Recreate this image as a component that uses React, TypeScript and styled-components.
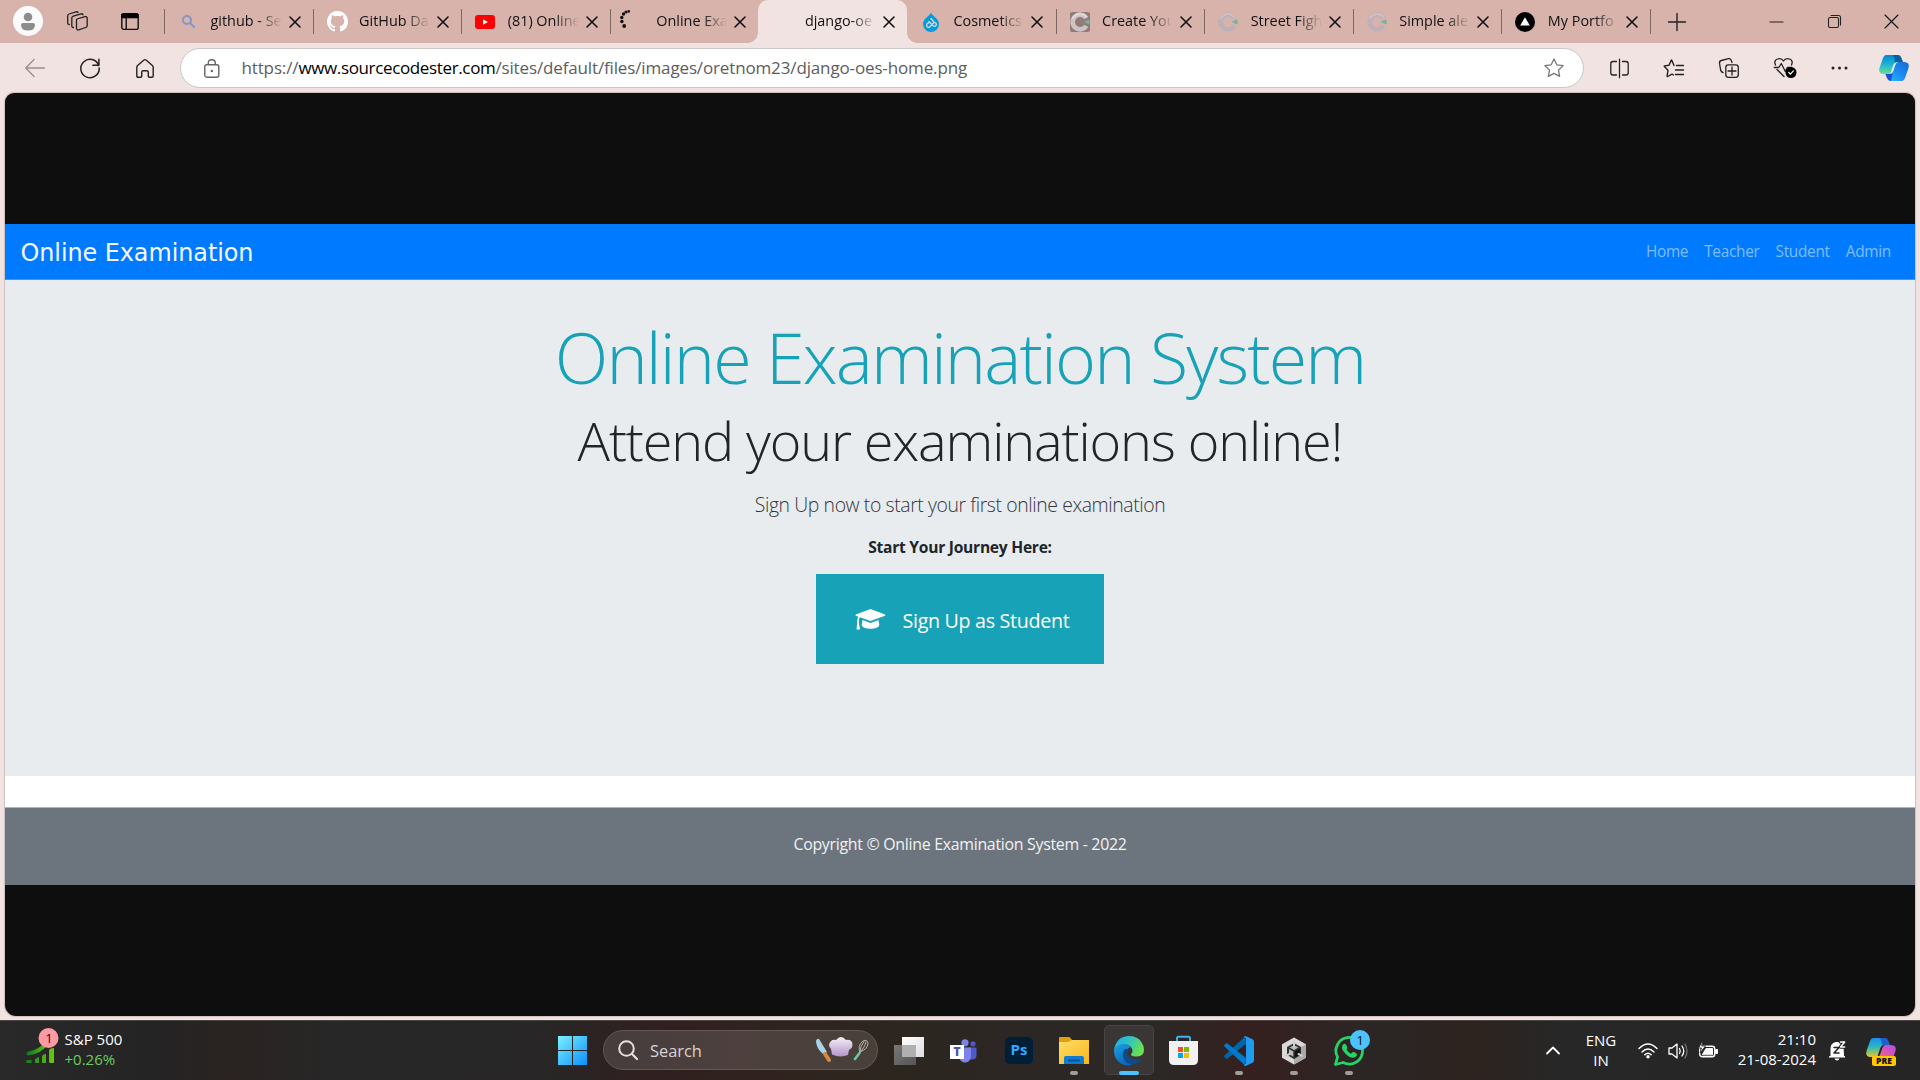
import React from "react";
import styled, { createGlobalStyle } from "styled-components";

const sans = '"Open Sans", "Noto Sans", sans-serif';

const GlobalStyle = createGlobalStyle`
  * { box-sizing: border-box; }
  body { margin: 0; overflow: hidden; background: #f1e3e1; font-family: ${sans}; }
  svg { display: block; flex: none; overflow: visible; }
`;

const Screen = styled.div`
  width: 1920px;
  height: 1080px;
  display: flex;
  flex-direction: column;
  overflow: hidden;
`;

/* ---------- tab strip ---------- */

const TabStrip = styled.header`
  height: 43px;
  flex: none;
  display: flex;
  background: #d8b3ac;
`;

const StripTools = styled.div`
  width: 164px;
  display: flex;
  align-items: center;
  padding: 0 0 1px 13px;
`;

const Avatar = styled.div`
  width: 30px;
  height: 30px;
  border-radius: 50%;
  background: #fbfbfb;
  display: grid;
  place-items: center;
  margin-right: 24px;
`;

const ToolGap = styled.div`
  margin-right: 33px;
`;

const TabItem = styled.div<{ $active?: boolean; $line?: boolean }>`
  width: 148.6px;
  height: 43px;
  flex: none;
  display: flex;
  align-items: center;
  position: relative;
  padding-left: 14px;
  background: ${(p) => (p.$active ? "#f1e3e1" : "transparent")};
  border-radius: ${(p) => (p.$active ? "10px 10px 0 0" : "0")};
  &::before {
    content: "";
    display: ${(p) => (p.$line || p.$active ? "block" : "none")};
    position: absolute;
    left: ${(p) => (p.$active ? "-10px" : "0")};
    top: ${(p) => (p.$active ? "33px" : "9px")};
    width: ${(p) => (p.$active ? "10px" : "1px")};
    height: ${(p) => (p.$active ? "10px" : "25px")};
    background: ${(p) => (p.$active ? "radial-gradient(circle at 0 0, transparent 9.5px, #f1e3e1 10px)" : "#7d6763")};
  }
  &::after {
    content: "";
    display: ${(p) => (p.$active ? "block" : "none")};
    position: absolute;
    right: -10px;
    top: 33px;
    width: 10px;
    height: 10px;
    background: radial-gradient(circle at 100% 0, transparent 9.5px, #f1e3e1 10px);
  }
`;

const TabIcon = styled.div`
  width: 20px;
  height: 43px;
  display: grid;
  place-items: center;
`;

const TabTitle = styled.div`
  width: 73px;
  margin-left: 12.5px;
  white-space: nowrap;
  font-size: 14.4px;
  line-height: 24px;
  padding-bottom: 1px;
  color: #111;
  mask-image: linear-gradient(90deg, #000 46px, transparent 71px);
`;

const TabClose = styled.div`
  margin-left: 6px;
`;

const StripEnd = styled.div`
  width: 56px;
  height: 25px;
  margin-top: 9px;
  border-left: 1px solid #7d6763;
  display: flex;
  align-items: center;
  padding-left: 17px;
`;

const WindowButtons = styled.div`
  margin-left: auto;
  display: flex;
`;

const WindowButton = styled.div`
  width: 57.3px;
  height: 43px;
  display: grid;
  place-items: center;
`;

/* ---------- address bar ---------- */

const Toolbar = styled.div`
  height: 50px;
  flex: none;
  display: flex;
  align-items: center;
  padding-left: 7.5px;
  background: #f1e3e1;
`;

const ToolCell = styled.div`
  width: 55px;
  height: 48px;
  display: grid;
  place-items: center;
  flex: none;
`;

const AddressField = styled.div`
  width: 1404px;
  height: 40px;
  margin: 0 8px 0 7px;
  flex: none;
  border: 1px solid #cbc7c6;
  border-radius: 20px;
  background: #fff;
  display: flex;
  align-items: center;
  padding: 0 19px 0 23px;
`;

const Url = styled.div`
  flex: 1;
  margin-left: 22px;
  font-size: 17px;
  letter-spacing: -0.14px;
  line-height: 24px;
  color: #5d5d5d;
`;

const Domain = styled.span`
  color: #000;
  letter-spacing: -0.36px;
`;

/* ---------- image viewer ---------- */

const Viewer = styled.main`
  width: 1910px;
  height: 923px;
  margin: 0 auto 4px;
  flex: none;
  border-radius: 9px 9px 11px 11px;
  background: #0e0e0e;
  display: flex;
  flex-direction: column;
  padding-top: 131px;
  box-shadow: 0 0 1px 1px #cdbfbd;
`;

const Navbar = styled.nav`
  height: 56px;
  flex: none;
  background: #007bff;
  border-bottom: 1px solid #3c98f8;
  display: flex;
  justify-content: space-between;
  align-items: center;
  padding: 0 24px 0 15.5px;
`;

const Brand = styled.div`
  font-family: "DejaVu Sans", sans-serif;
  font-size: 23.9px;
  line-height: 36px;
  letter-spacing: -0.06px;
  padding-top: 2px;
  color: #f4f8ff;
`;

const NavLinks = styled.div`
  display: flex;
  gap: 16px;
`;

const NavLink = styled.a`
  font-size: 15.4px;
  letter-spacing: -0.3px;
  line-height: 24px;
  padding-top: 1px;
  color: #80bdff;
`;

const Hero = styled.section`
  height: 496px;
  flex: none;
  background: #e8ecef;
  display: flex;
  flex-direction: column;
  align-items: center;
  padding-top: 35px;
`;

const Title = styled.h1`
  margin: 0;
  font-size: 70px;
  font-weight: 300;
  line-height: 84px;
  letter-spacing: -1.88px;
  color: #17a2b8;
`;

const Subtitle = styled.h2`
  margin: 7px 0 0;
  font-size: 54px;
  font-weight: 300;
  line-height: 68px;
  letter-spacing: -1.12px;
  color: #212529;
`;

const Lead = styled.p`
  margin: 16px 0 0;
  font-size: 19.4px;
  font-weight: 300;
  line-height: 30px;
  letter-spacing: -0.4px;
  color: #33373b;
`;

const Prompt = styled.p`
  margin: 15px 0 0;
  font-size: 15.6px;
  font-weight: 700;
  line-height: 24px;
  letter-spacing: -0.26px;
  color: #212529;
`;

const SignUp = styled.button`
  width: 288px;
  height: 90px;
  margin: 15px 0 0;
  padding: 2px 0 0 38.5px;
  border: 0;
  background: #17a2b8;
  color: #fff;
  display: flex;
  align-items: center;
  gap: 17px;
  font-family: ${sans};
  font-size: 19.7px;
  letter-spacing: -0.32px;
`;

const Paper = styled.div`
  flex: none;
  padding-top: 32px;
  background: #fff;
`;

const Footer = styled.footer`
  height: 77px;
  background: #6c757d;
  box-shadow: 0 -1px 0 #b0b5b4;
  text-align: center;
  padding-top: 24px;
  font-size: 15.9px;
  line-height: 24px;
  letter-spacing: -0.29px;
  color: #f1f2f3;
`;

/* ---------- taskbar ---------- */

const Taskbar = styled.footer`
  height: 60px;
  flex: none;
  border-top: 1px solid #4a4646;
  display: flex;
  color: #fff;
  background: linear-gradient(90deg, #292929 0, #242424 150px, #2a2321 230px, #272727 330px, #282626 540px, #302020 650px, #30241f 800px, #2c261f 900px, #2b2725 1050px, #2b2826 1160px, #35201f 1250px, #2b2625 1370px, #2d231f 1470px, #272727 1560px, #252525 1920px);
`;

const Widget = styled.div`
  width: 545px;
  display: flex;
  padding: 8px 0 0 26px;
`;

const WidgetText = styled.div`
  margin-left: 6.5px;
  font-size: 15px;
  line-height: 20px;
`;

const Gain = styled.div`
  color: #6ccb5f;
`;

const TaskCell = styled.div<{ $focused?: boolean }>`
  width: 55px;
  height: 59px;
  flex: none;
  position: relative;
  display: grid;
  place-items: center;
  &::before {
    content: "";
    position: absolute;
    display: ${(p) => (p.$focused ? "block" : "none")};
    inset: 4px 2px 5px 3px;
    border: 1px solid #4a4444;
    border-radius: 5px;
    background: #3b3636;
  }
  svg { position: relative; }
`;

const Indicator = styled.div<{ $active?: boolean }>`
  position: absolute;
  bottom: 5px;
  left: ${(p) => (p.$active ? "18px" : "24px")};
  width: ${(p) => (p.$active ? "20px" : "8px")};
  height: 4px;
  border-radius: 2px;
  background: ${(p) => (p.$active ? "#4cc2ff" : "#a09c9b")};
`;

const SearchBox = styled.div`
  width: 275px;
  height: 40px;
  margin: 9px 3px 0 3px;
  flex: none;
  border: 1px solid #635857;
  border-radius: 20px;
  background: linear-gradient(90deg, #473d3d, #4d403e 50%, #494039);
  display: flex;
  align-items: center;
  padding: 0 8px 0 14px;
`;

const SearchLabel = styled.div`
  flex: 1;
  margin-left: 12px;
  padding-top: 1px;
  font-size: 16.4px;
  line-height: 24px;
  color: #d8d3d2;
`;

const Tray = styled.div`
  margin-left: auto;
  width: 374px;
  display: flex;
  align-items: center;
  font-size: 15px;
  line-height: 20px;
`;

const Language = styled.div`
  width: 34px;
  margin: 0 20px 0 24px;
  padding-bottom: 2px;
  text-align: center;
`;

const StatusIcons = styled.div`
  width: 82px;
  display: flex;
  gap: 10px;
`;

const Clock = styled.div`
  width: 96px;
  text-align: right;
  margin-right: 12px;
  padding-bottom: 4px;
`;

const Bell = styled.div`
  margin-right: 20px;
`;

/* ---------- drawings ---------- */

const Draw = ({ w, h, children }: { w: number; h: number; children: React.ReactNode }) => (
  <svg width={w} height={h} viewBox={`0 0 ${w} ${h}`} fill="none" strokeLinecap="round" strokeLinejoin="round">
    {children}
  </svg>
);

const CloseX = ({ size = 10, w = 1.6 }: { size?: number; w?: number }) => (
  <Draw w={size} h={size}><path d={`M0 0 ${size} ${size}M${size} 0 0 ${size}`} stroke="#111" strokeWidth={w} /></Draw>
);

const RingC = ({ boxed }: { boxed?: boolean }) => (
  <Draw w={20} h={20}>
    {boxed && <rect width="20" height="20" rx="2" fill="#917c77" />}
    <path d="M16.300 6.100A7.400 7.400 0 1 0 16.300 13.900" stroke={boxed ? "#cfc2c6" : "#beb0b8"} strokeWidth="4.600" strokeLinecap="butt" />
    <path d="M16 4.500A8.200 8.200 0 0 0 3 6" stroke={boxed ? "#e2d8da" : "#cfc0c5"} strokeWidth="2" />
    <path d="M19 8.300v3.600l-4-1.800z" fill="#79b9a5" stroke="#68b49d" strokeWidth="1" />
  </Draw>
);

const SearchMini = () => (
  <Draw w={13} h={13}><circle cx="5" cy="5" r="4" stroke="#8296bf" strokeWidth="1.900" /><path d="m8.300 8.300 3.700 3.700" stroke="#8296bf" strokeWidth="2" /></Draw>
);

const GitHubMark = () => (
  <svg width="21" height="21" viewBox="0 0 16 16" fill="#fff">
    <path d="M8 0C3.580 0 0 3.580 0 8c0 3.540 2.290 6.530 5.470 7.590.4.070.55-.17.55-.38 0-.19-.01-.82-.01-1.490-2.010.37-2.530-.49-2.690-.94-.09-.23-.48-.94-.82-1.130-.28-.15-.68-.52-.01-.53.63-.01 1.080.58 1.230.82.72 1.210 1.870.87 2.330.66.07-.52.28-.87.51-1.070-1.780-.2-3.640-.89-3.640-3.950 0-.87.31-1.590.82-2.150-.08-.2-.36-1.020.08-2.120 0 0 .67-.21 2.200.82.64-.18 1.320-.27 2-.27s1.360.09 2 .27c1.530-1.040 2.200-.82 2.200-.82.44 1.100.16 1.920.08 2.120.51.56.82 1.270.82 2.150 0 3.070-1.870 3.750-3.650 3.950.29.25.54.73.54 1.480 0 1.070-.01 1.930-.01 2.200 0 .21.15.46.55.38A8.010 8.010 0 0 0 16 8c0-4.420-3.580-8-8-8z" />
  </svg>
);

const YouTubeMark = () => (
  <Draw w={20} h={14}><rect width="20" height="14" rx="3" fill="#f00" /><path d="m8 4.200 5 2.800-5 2.800z" fill="#fff" /></Draw>
);

const Spinner = () => (
  <Draw w={20} h={20}>
    <g fill="#111" transform="translate(-4 -2.500)">
      <circle cx="4.200" cy="16.500" r="1.900" /><circle cx="1.900" cy="12" r="1.700" /><circle cx="1.800" cy="8" r="1.700" />
      <circle cx="3.500" cy="4.500" r="1.700" /><circle cx="6" cy="2.500" r="1.600" /><circle cx="8.700" cy="1.900" r="1.300" />
    </g>
  </Draw>
);

const DrupalMark = () => (
  <Draw w={16} h={20}>
    <path d="M8 .5C9 4 16 6.500 16 12a8 8 0 0 1-16 0C0 6.500 7 4 8 .5Z" fill="#009cde" />
    <path d="M6 9.500 10.500 14a1.900 1.900 0 1 0 .5-3.500L8 13.500l-1.500 1.700a1.900 1.900 0 1 1-1.500-4l1.500-1M8 6.500l3 3.500" stroke="#d8d3d6" strokeWidth="1.400" />
  </Draw>
);

const VercelMark = () => (
  <Draw w={20} h={20}><circle cx="10" cy="10" r="10" fill="#000" /><path d="m10 5.300 4.800 8.200H5.200z" fill="#fff" /></Draw>
);

const tabs = [
  { title: "github - Se", icon: <SearchMini />, line: true },
  { title: "GitHub Da", icon: <GitHubMark />, line: true },
  { title: "(81) Online", icon: <YouTubeMark />, line: true },
  { title: "Online Exa", icon: <Spinner />, line: true },
  { title: "django-oe", icon: null, active: true },
  { title: "Cosmetics", icon: <DrupalMark /> },
  { title: "Create You", icon: <RingC boxed />, line: true },
  { title: "Street Figh", icon: <RingC />, line: true },
  { title: "Simple ale", icon: <RingC />, line: true },
  { title: "My Portfo", icon: <VercelMark />, line: true },
];

const Workspaces = () => (
  <Draw w={21} h={20}>
    <g stroke="#222" strokeWidth="1.300">
      <path d="m10 8 8-2.300q2-.4 2.200 1.300v7.500q0 1.500-1.500 2l-7 2.300q-2 .5-2.200-1.500V9.500q0-1.200.5-1.500Z" />
      <path d="M6.500 16.500q-1.500.2-1.700-1.500V7q0-1.300 1.500-1.800L14 2.800q1.500-.3 2 1" />
      <path d="M2.300 13.500Q.7 13.500.7 12V4.800Q.7 3.400 2 3L9 .8q1.500-.3 2 .8" />
    </g>
  </Draw>
);

const TabActions = () => (
  <Draw w={18} h={17}>
    <rect x=".8" y=".8" width="16.400" height="15.600" rx="2" stroke="#111" strokeWidth="1.400" />
    <path d="M1 1h16v3.800H1z" fill="#000" stroke="#000" /><path d="M5.200 5v11" stroke="#111" strokeWidth="1.400" />
  </Draw>
);

const GradCap = () => (
  <Draw w={31} h={22}>
    <path d="M15.500 0 30 5.500Q31 6.200 30 6.800L15.500 12 5 8.200Q3.800 9.500 3.700 11.500q1 .8.100 2L5 20.500H1.500L2.300 13.500q-1-1 0-2 .1-2 1-3.800L.8 6.800Q0 6.200.8 5.500Z" fill="#fff" />
    <path d="m7.500 11 8 2.900 8-2.900.8 5.200q-1 3.400-8.800 3.600-7.800-.2-8.800-3.600Z" fill="#fff" />
  </Draw>
);

const Copilot = ({ pre }: { pre?: boolean }) => (
  <svg width="30" height="28" viewBox="0 0 30 28">
    <defs>
      <linearGradient id={pre ? "cpa" : "cba"} x1="0" y1="0" x2="0" y2="1"><stop stopColor={pre ? "#1a8cf0" : "#0a86cc"} /><stop offset=".45" stopColor={pre ? "#2ab7c0" : "#18b0d8"} /><stop offset="1" stopColor={pre ? "#e4c72c" : "#68e090"} /></linearGradient>
      <linearGradient id={pre ? "cpb" : "cbb"} x1="1" y1="0" x2="0" y2="1"><stop stopColor={pre ? "#a84df0" : "#1668d8"} /><stop offset=".5" stopColor={pre ? "#e85a9c" : "#1b8bf5"} /><stop offset="1" stopColor={pre ? "#f79455" : "#28c2fc"} /></linearGradient>
    </defs>
    <path d="M7 1h11q3 0 4 3l1.500 4H19q-2 0-3 3l-2 6q-1 3-4 3H5q-6 0-4.500-6L4 4q1-3 3-3Z" fill={`url(#${pre ? "cpa" : "cba"})`} />
    <path d="M14 1h5q2.500 0 3.500 3l1.500 4h-5q-2 0-3 2 0-6-2-9Z" fill={pre ? "#2452cc" : "#08579d"} opacity=".85" />
    <path d="M23 27H12q-3 0-4-3l-1.500-4H11q2 0 3-3l2-6q1-3 4-3h5q6 0 4.500 6L26 24q-1 3-3 3Z" fill={`url(#${pre ? "cpb" : "cbb"})`} />
    {!pre && <path d="M6.500 20H11q2 0 3-2l-2 9q-3-.3-4-3Z" fill="#193fd8" opacity=".85" />}
    <path d="M18.800 8.500q-2 .5-2.500 2.500l-2.500 7q-.5 1.500-2.500 2 .300-1 .800-2.500l2-6q.8-2.500 2.700-3Z" fill={pre ? "#262626" : "#e9f2f0"} />
    {pre && (
      <g><rect x="6" y="19" width="24" height="10" rx="2" fill="#ffc800" /><text x="18" y="27" textAnchor="middle" fontFamily="Open Sans" fontSize="8.500" fontWeight="800" fill="#111">PRE</text></g>
    )}
  </svg>
);

const StockIcon = () => (
  <Draw w={32} h={44}>
    <defs><linearGradient id="stk"><stop stopColor="#117a22" /><stop offset="1" stopColor="#68c90d" /></linearGradient></defs>
    <path d="M2.500 24.500C11 23.500 17 19 22 13" stroke="url(#stk)" strokeWidth="4" />
    <path d="M1.500 31h4v3h-4a1 1 0 0 1 0-3ZM9 30l4-2v6H9ZM16 27q1-2 4-2v9h-4ZM23 21q1-2 5-2v15h-4q-1 0-1-1Z" fill="url(#stk)" />
    <circle cx="22.500" cy="9" r="10" fill="#ff99a4" />
    <text x="23" y="13.500" textAnchor="middle" fontFamily="Open Sans" fontSize="13" fill="#111">1</text>
  </Draw>
);

const WindowsLogo = () => (
  <Draw w={29} h={29}>
    <defs><linearGradient id="win" x1="0" y1="0" x2="29" y2="29" gradientUnits="userSpaceOnUse"><stop stopColor="#7cf0ff" /><stop offset="1" stopColor="#0a90fa" /></linearGradient></defs>
    <path d="M0 0h14v14H0zM15 0h14v14H15zM0 15h14v14H0zM15 15h14v14H15z" fill="url(#win)" />
  </Draw>
);

const ChefArt = () => (
  <Draw w={54} h={28}>
    <defs><linearGradient id="hat" x1="0" y1="0" x2="0" y2="1"><stop stopColor="#f4eef8" /><stop offset="1" stopColor="#b596cc" /></linearGradient></defs>
    <path d="M1 5q1-3 3-2l8 13-4 2Q1 12 1 5Z" fill="#a9d3e8" /><path d="m10 18 4 6" stroke="#d9893e" strokeWidth="4" />
    <path d="M17 18.500 16 13q-4-4 0-8 2-2 5-1 5-6 10 0 4-1 6 2 2 5-3 8l-1 5q-8 3-16-.5Z" fill="url(#hat)" />
    <path d="M40 23 44.500 17" stroke="#68c7b0" strokeWidth="2.500" />
    <path d="M45 16q-3-6 3-11 4-2 5 2 0 6-8 9ZM45 16q0-6 4-10.500M45 16q4-3 6-10" stroke="#b4b4ac" strokeWidth="1" />
  </Draw>
);

const TaskView = () => (
  <Draw w={30} h={28}>
    <defs><linearGradient id="tva" x1="0" y1="0" x2="1" y2="1"><stop stopColor="#fff" /><stop offset="1" stopColor="#ddd" /></linearGradient><linearGradient id="tvb" x1="0" y1="0" x2="1" y2="1"><stop stopColor="#777" /><stop offset="1" stopColor="#555" /></linearGradient></defs>
    <path d="M8 0h22v20H8z" fill="url(#tva)" /><path d="M0 8h22v20H0z" fill="url(#tvb)" /><path d="M8 8h14v12H8z" fill="#b0b0b0" />
  </Draw>
);

const Teams = () => (
  <Draw w={27} h={24}>
    <circle cx="15" cy="3.800" r="3.600" fill="#7b83eb" /><circle cx="23" cy="4.800" r="2.600" fill="#5059c9" />
    <path d="M18 8.500h8.500V16q0 4.500-4.500 4.500h-4z" fill="#5059c9" /><path d="M10 8.500h11v9q-1 6-6 6-4 0-5.500-4z" fill="#7b83eb" />
    <path d="M0 6h14v14H0z" fill="#fff" /><text x="7" y="17.300" textAnchor="middle" fontFamily="Open Sans" fontSize="12" fontWeight="800" fill="#4b53bc">T</text>
  </Draw>
);

const Photoshop = () => (
  <Draw w={28} h={28}><rect width="28" height="27" rx="5" fill="#001e36" /><text x="14" y="18" textAnchor="middle" fontFamily="Open Sans" fontSize="15" fontWeight="700" fill="#31a8ff">Ps</text></Draw>
);

const Explorer = () => (
  <Draw w={30} h={27}>
    <defs><linearGradient id="fol" x1="0" y1="0" x2="1" y2="1"><stop stopColor="#ffdd68" /><stop offset="1" stopColor="#f8b71c" /></linearGradient></defs>
    <path d="M0 1q0-1 1-1h9q1 0 3 3v3H0z" fill="#e0a00c" /><path d="M0 5h9l4-2h17v24H0z" fill="url(#fol)" />
    <path d="M5 27v-6q0-2 2-2h16q2 0 2 2v6z" fill="#117bd1" /><path d="M10 23.500h10" stroke="#07549c" strokeWidth="2" />
  </Draw>
);

const Edge = () => (
  <Draw w={30} h={30}>
    <defs>
      <linearGradient id="ega" x1="0" y1="0" x2="1" y2=".4"><stop stopColor="#22a8e8" /><stop offset=".5" stopColor="#2dc3c8" /><stop offset="1" stopColor="#67e052" /></linearGradient>
      <linearGradient id="egb" x1="0" y1="0" x2=".6" y2="1"><stop stopColor="#1ba1e4" /><stop offset="1" stopColor="#0a64b8" /></linearGradient>
    </defs>
    <path d="M0 15C1 5 7 0 15 0q8 0 12 5.500 3 4 3 8.500 0 6-7 6.500-6 0-6-2 2-2 1.500-4.500Q17 9 10 8.500 4 9 0 15Z" fill="url(#ega)" />
    <path d="M0 15Q2 8 10 8q5 0 7.500 3-6 1-6 7 1 8 10 8.500Q14 32 7 27.500 0 23 0 15Z" fill="url(#egb)" />
    <path d="M11 13q-4 5-1 10.500Q13 29 20 28q5-1 8-5.500-3 1.500-7 1-7-.8-7.500-6-.1-3 1.500-4.500Z" fill="#114a8b" />
  </Draw>
);

const Store = () => (
  <Draw w={29} h={29}>
    <path d="M8 6V2q0-1.200 1.200-1.200h10.600Q21 .8 21 2v4" stroke="#38b7ed" strokeWidth="1.900" />
    <path d="M0 5h29v19q0 5-5 5H5q-5 0-5-5z" fill="#f1f1f1" />
    <path d="M9 11h5v5H9z" fill="#f25022" /><path d="M15 11h5v5h-5z" fill="#7fba00" /><path d="M9 17h5v5H9z" fill="#00a4ef" /><path d="M15 17h5v5h-5z" fill="#ffb900" />
  </Draw>
);

const VSCode = () => (
  <Draw w={30} h={30}>
    <path d="M22 8 3.500 22.500q-1 .7-1.700 0L.4 21q-.8-.8 0-1.600L21 .5l1 7.500Z" fill="#0065a9" />
    <path d="M22 22 3.500 7.500q-1-.7-1.700 0L.4 9q-.8.800 0 1.600L21 29.500l1-7.500Z" fill="#007acc" />
    <path d="m21.500 0 7 3.200Q30 4 30 5.500v19q0 1.500-1.500 2.300l-7 3.200q-1 0-1.500-1l2-1.500v-25L20 1q.5-1 1.500-1Z" fill="#1f9cf0" />
  </Draw>
);

const Unity = () => (
  <Draw w={26} h={28}>
    <path d="m13 .5 12 6.800v13.400l-12 6.800L1 20.700V7.300Z" fill="#d9d9d9" /><path d="M13 14v13.500l12-6.800V7.300Z" fill="#a9a9a9" />
    <path d="m13 7 6 3.500v7L13 21l-6-3.500v-7Z" fill="#bdbdbd" stroke="#333" strokeWidth="2" />
    <path d="M13 14v7l6-3.500v-7Z" fill="#111" /><path d="m7 10.500 6 3.500 6-3.500M13 14v7" stroke="#333" strokeWidth="1.500" />
    <path d="M13 4.500V9M5 18.800 8.500 17M21 18.800 17.500 17" stroke="#d0d0d0" strokeWidth="2" />
  </Draw>
);

const WhatsApp = () => (
  <Draw w={30} h={30}>
    <path d="M1.500 28.500 3.500 21A13.300 13.300 0 1 1 9 26.500Z" stroke="#25d366" strokeWidth="2.800" />
    <path d="M9 8.500q1.500-1.500 3 0l1.300 3q.3.800-.8 2 1.500 3 4.500 4.300l1.500-1.500q.7-.7 1.500-.2l2.500 1.300q1 .5.200 2-1.200 2.600-4.500 2.300-3-.3-6.500-3.800-3.700-3.800-3.700-6.400 0-2 1-3Z" fill="#25d366" />
    <circle cx="26" cy="4" r="10" fill="#4cc2ff" /><text x="26" y="9" textAnchor="middle" fontFamily="Open Sans" fontSize="13.500" fill="#111">1</text>
  </Draw>
);

export default function App() {
  return (
    <>
      <GlobalStyle />
      <Screen>
        <TabStrip>
          <StripTools>
            <Avatar><Draw w={14} h={17}><circle cx="7" cy="4" r="4.300" fill="#8c8c8c" /><path d="M0 12q0-2 2-2h10q2 0 2 2 0 5.500-7 5.500T0 12Z" fill="#8c8c8c" /></Draw></Avatar>
            <ToolGap><Workspaces /></ToolGap>
            <TabActions />
          </StripTools>
          {tabs.map((t) => (
            <TabItem key={t.title} $active={t.active} $line={t.line}>
              <TabIcon>{t.icon}</TabIcon>
              <TabTitle>{t.title}</TabTitle>
              <TabClose><CloseX /></TabClose>
            </TabItem>
          ))}
          <StripEnd><Draw w={18} h={18}><path d="M9 .5v17M.5 9h17" stroke="#222" strokeWidth="1.400" /></Draw></StripEnd>
          <WindowButtons>
            <WindowButton><Draw w={13} h={2}><path d="M0 1h13" stroke="#222" strokeWidth="1.100" /></Draw></WindowButton>
            <WindowButton><Draw w={13} h={13}><rect x=".5" y="2.500" width="10" height="10" rx="1.500" stroke="#222" strokeWidth="1.100" /><path d="M3 .5h7.500q2 0 2 2V10" stroke="#222" strokeWidth="1.100" /></Draw></WindowButton>
            <WindowButton><CloseX size={13} w={1.1} /></WindowButton>
          </WindowButtons>
        </TabStrip>

        <Toolbar>
          <ToolCell><Draw w={20} h={18}><path d="M19.500 9H.8M9 .5.8 9 9 17.500" stroke="#9b8f8e" strokeWidth="1.300" /></Draw></ToolCell>
          <ToolCell><Draw w={20} h={20}><path d="M18.700 7.500A9.200 9.200 0 1 0 19.200 10M18.900 1.200v6h-6" stroke="#222" strokeWidth="1.500" /></Draw></ToolCell>
          <ToolCell><Draw w={18} h={19}><path d="M.8 8.200q0-1 .8-1.700L8 1q1-.8 2 0l6.400 5.500q.8.700.8 1.700V17q0 1.200-1.200 1.200h-2.700q-1 0-1-1v-4q0-1.500-1.500-1.500H7.200q-1.500 0-1.500 1.500v4q0 1-1 1H2Q.8 18.200.8 17Z" stroke="#222" strokeWidth="1.400" /></Draw></ToolCell>
          <AddressField>
            <Draw w={16} h={19}><rect x=".8" y="5.800" width="14" height="12.400" rx="2" stroke="#666" strokeWidth="1.400" /><path d="M4.300 5.500V4q0-3.300 3.500-3.300T11.300 4v1.500" stroke="#666" strokeWidth="1.400" /><circle cx="7.800" cy="12" r="1.200" fill="#666" /></Draw>
            <Url>https://<Domain>www.sourcecodester.com</Domain>/sites/default/files/images/oretnom23/django-oes-home.png</Url>
            <Draw w={20} h={20}><path d="m10 1 2.800 5.800 6.300.9-4.600 4.400 1.100 6.300-5.600-3-5.600 3 1.100-6.300L.9 7.700l6.300-.9Z" stroke="#777" strokeWidth="1.300" /></Draw>
          </AddressField>
          <ToolCell><Draw w={19} h={19}><path d="M6.500 2.500H3Q.8 2.500.8 4.700v9q0 2.300 2.200 2.300h3.500M12.500 2.500H16q2.200 0 2.200 2.200v9q0 2.300-2.200 2.300h-3.500M9.500.2v18.500" stroke="#222" strokeWidth="1.300" /></Draw></ToolCell>
          <ToolCell><Draw w={20} h={19}><path d="m10 6.500-2.200-5.300q-.3-.5-.6 0L5 6.200l-4.500.7q-.5.200-.1.600l3.600 3.700-.9 5.800q0 .8.600.5l4.300-2.300 1.500.8M12.500 6.500h7M11.500 11h8M11.500 15.500h8" stroke="#222" strokeWidth="1.400" /></Draw></ToolCell>
          <ToolCell><Draw w={20} h={20}><rect x="6.800" y="6.800" width="12.500" height="12.500" rx="2.500" stroke="#222" strokeWidth="1.300" /><path d="M13 9v8M9 13h8M4 14.500Q2 14 1.600 12L.5 5Q.3 3 2.300 2.500L9.500.7q2-.3 2.700 1.600L13 4.500" stroke="#222" strokeWidth="1.300" /></Draw></ToolCell>
          <ToolCell><Draw w={20} h={20}><path d="M.3 9.500h4.500l2.500-4 4 8 2-4h4.500M1.500 7Q-.5 2.500 3.500 1q4-1.300 6 2 2-3.300 6-2 4 1.500 2 6M3 11.500l7 7" stroke="#222" strokeWidth="1.300" /><circle cx="17" cy="14.500" r="5.500" fill="#000" /><path d="m14.800 14.500 1.600 1.600 3-3.200" stroke="#fff" strokeWidth="1.200" /></Draw></ToolCell>
          <ToolCell><Draw w={17} h={4}><circle cx="2" cy="2" r="1.500" fill="#222" /><circle cx="8.500" cy="2" r="1.500" fill="#222" /><circle cx="15" cy="2" r="1.500" fill="#222" /></Draw></ToolCell>
          <ToolCell><Copilot /></ToolCell>
        </Toolbar>

        <Viewer>
          <Navbar>
            <Brand>Online Examination</Brand>
            <NavLinks>
              <NavLink>Home</NavLink>
              <NavLink>Teacher</NavLink>
              <NavLink>Student</NavLink>
              <NavLink>Admin</NavLink>
            </NavLinks>
          </Navbar>
          <Hero>
            <Title>Online Examination System</Title>
            <Subtitle>Attend your examinations online!</Subtitle>
            <Lead>Sign Up now to start your first online examination</Lead>
            <Prompt>Start Your Journey Here:</Prompt>
            <SignUp><GradCap />Sign Up as Student</SignUp>
          </Hero>
          <Paper>
            <Footer>Copyright © Online Examination System - 2022</Footer>
          </Paper>
        </Viewer>

        <Taskbar>
          <Widget>
            <StockIcon />
            <WidgetText>S&amp;P 500<Gain>+0.26%</Gain></WidgetText>
          </Widget>
          <TaskCell><WindowsLogo /></TaskCell>
          <SearchBox>
            <Draw w={20} h={20}><circle cx="8.500" cy="8.500" r="7.300" stroke="#e4dfde" strokeWidth="2" /><path d="m14 14 5 5" stroke="#e4dfde" strokeWidth="2.300" /></Draw>
            <SearchLabel>Search</SearchLabel>
            <ChefArt />
          </SearchBox>
          <TaskCell><TaskView /></TaskCell>
          <TaskCell><Teams /></TaskCell>
          <TaskCell><Photoshop /></TaskCell>
          <TaskCell><Explorer /><Indicator /></TaskCell>
          <TaskCell $focused><Edge /><Indicator $active /></TaskCell>
          <TaskCell><Store /></TaskCell>
          <TaskCell><VSCode /><Indicator /></TaskCell>
          <TaskCell><Unity /><Indicator /></TaskCell>
          <TaskCell><WhatsApp /><Indicator /></TaskCell>
          <Tray>
            <Draw w={14} h={8}><path d="m1 6.500 6-6 6 6" stroke="#fff" strokeWidth="1.800" /></Draw>
            <Language>ENG<br />IN</Language>
            <StatusIcons>
              <Draw w={20} h={16}><path d="M1 5.500q9-9 18 0M4 9q6-6 12 0M6.800 11.800q3.200-3 6.400 0" stroke="#fff" strokeWidth="1.500" /><circle cx="10" cy="13.800" r="1.700" fill="#fff" /></Draw>
              <Draw w={20} h={16}><path d="M1 5h3l5-4v14l-5-4H1Z" stroke="#fff" strokeWidth="1.300" /><path d="M11.500 5.500q1.500 2.500 0 5M14 3q3.500 5 0 10" stroke="#fff" strokeWidth="1.300" /><path d="M17 1q4 7 0 14" stroke="#777" strokeWidth="1.200" /></Draw>
              <Draw w={20} h={16}><rect x="1.700" y="3.200" width="15" height="10.600" rx="2.500" stroke="#fff" strokeWidth="1.400" /><path d="M4.500 11.500 8 5.500h6.500v6zM18 6.500h1.500v4H18z" fill="#fff" stroke="#fff" /><path d="M4.500-2 .5 5h3L2 10l5.500-7H4Z" fill="#fff" stroke="#272727" strokeWidth=".8" /></Draw>
            </StatusIcons>
            <Clock>21:10<br />21-08-2024</Clock>
            <Bell><Draw w={18} h={20}><path d="M3 15V7.500q0-6 6-6 5 0 6 4.500l.5 9 1.500 1H1.500Z" fill="#fff" stroke="#fff" /><path d="M6.500 17.500h5Q11 19.500 9 19.500t-2.500-2Z" fill="#fff" /><path d="M6 6.500h5L6 12h5" stroke="#272727" strokeWidth="1.600" /><path d="M12.500 1h4.200l-4.200 5h4.200" stroke="#272727" strokeWidth="3.500" /><path d="M12.500 1h4.200l-4.200 5h4.200" stroke="#fff" strokeWidth="1.400" /></Draw></Bell>
            <Copilot pre />
          </Tray>
        </Taskbar>
      </Screen>
    </>
  );
}
